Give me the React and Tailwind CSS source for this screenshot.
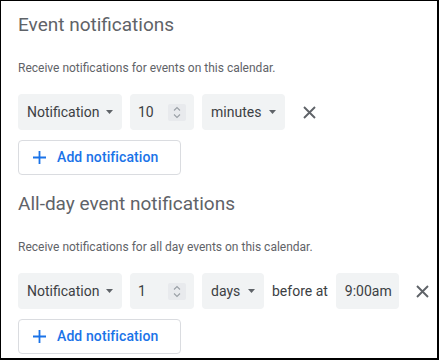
import React from "react";

const Caret = () => (
  <svg width="7" height="4" viewBox="0 0 7 4" className="shrink-0">
    <path d="M0 0 L7 0 L3.5 4 Z" fill="#5f6368" />
  </svg>
);

const XIcon = () => (
  <svg width="13" height="13" viewBox="0 0 13 13">
    <path d="M1 1 L12 12 M12 1 L1 12" stroke="#5f6368" strokeWidth="1.9" strokeLinecap="butt" />
  </svg>
);

const Spinner = () => (
  <div className="w-[18px] h-[17px] bg-[#e8eaed] rounded-[2px] flex flex-col items-center justify-center gap-[3px]">
    <svg width="8" height="5" viewBox="0 0 8 5">
      <path d="M1 4.5 L4 1.5 L7 4.5" stroke="#9aa0a6" strokeWidth="1.1" fill="none" />
    </svg>
    <svg width="8" height="5" viewBox="0 0 8 5">
      <path d="M1 0.5 L4 3.5 L7 0.5" stroke="#9aa0a6" strokeWidth="1.1" fill="none" />
    </svg>
  </div>
);

const Select = ({ label, w }) => (
  <div className={`${w} shrink-0 h-[36px] bg-[#f1f3f4] rounded-[4px] flex items-center justify-between pl-[9px] pr-[9px] text-[14px] text-[#3c4043]`}>
    <span>{label}</span>
    <Caret />
  </div>
);

const NumberBox = ({ value }) => (
  <div className="w-[64px] shrink-0 h-[36px] bg-[#f1f3f4] rounded-[4px] flex items-center justify-between pl-[8px] pr-[8px] text-[14px] text-[#3c4043]">
    <span>{value}</span>
    <Spinner />
  </div>
);

const AddButton = () => (
  <div className="w-[163px] h-[35px] border border-[#dadce0] rounded-[4px] bg-white flex items-center pl-[14px] gap-[11px]">
    <svg width="13" height="13" viewBox="0 0 13 13">
      <path d="M6.5 0 V13 M0 6.5 H13" stroke="#1a73e8" strokeWidth="1.8" />
    </svg>
    <span className="text-[14px] font-medium text-[#1a73e8] tracking-[0.1px]">Add notification</span>
  </div>
);

export default function App() {
  return (
    <div
      className="w-[439px] h-[360px] bg-white border-l border-t border-r-2 border-b-2 border-black pl-[17px] overflow-hidden"
      style={{ fontFamily: "Roboto, 'Noto Sans', sans-serif" }}
    >
      <div className="pt-[12px] text-[19px] leading-[24px] text-[#5f6368]">Event notifications</div>
      <div className="mt-[23px] text-[12px] leading-[16px] text-[#5f6368]">
        Receive notifications for events on this calendar.
      </div>
      <div className="mt-[18px] flex items-center gap-[8px]">
        <Select label="Notification" w="w-[104px]" />
        <NumberBox value="10" />
        <Select label="minutes" w="w-[83px]" />
        <div className="ml-[4px] w-[24px] h-[24px] shrink-0 flex items-center justify-center">
          <XIcon />
        </div>
      </div>
      <div className="mt-[10px]">
        <AddButton />
      </div>

      <div className="mt-[17px] text-[19px] leading-[24px] text-[#5f6368]">All-day event notifications</div>
      <div className="mt-[23px] text-[12px] leading-[16px] text-[#5f6368]">
        Receive notifications for all day events on this calendar.
      </div>
      <div className="mt-[18px] flex items-center gap-[8px]">
        <Select label="Notification" w="w-[104px]" />
        <NumberBox value="1" />
        <Select label="days" w="w-[62px]" />
        <span className="text-[14px] text-[#3c4043] whitespace-nowrap shrink-0">before at</span>
        <div className="w-[63px] shrink-0 h-[36px] bg-[#f1f3f4] rounded-[4px] flex items-center pl-[9px] text-[14px] text-[#3c4043]">
          9:00am
        </div>
        <div className="ml-[4px] w-[24px] h-[24px] shrink-0 flex items-center justify-center">
          <XIcon />
        </div>
      </div>
      <div className="mt-[10px]">
        <AddButton />
      </div>
    </div>
  );
}
